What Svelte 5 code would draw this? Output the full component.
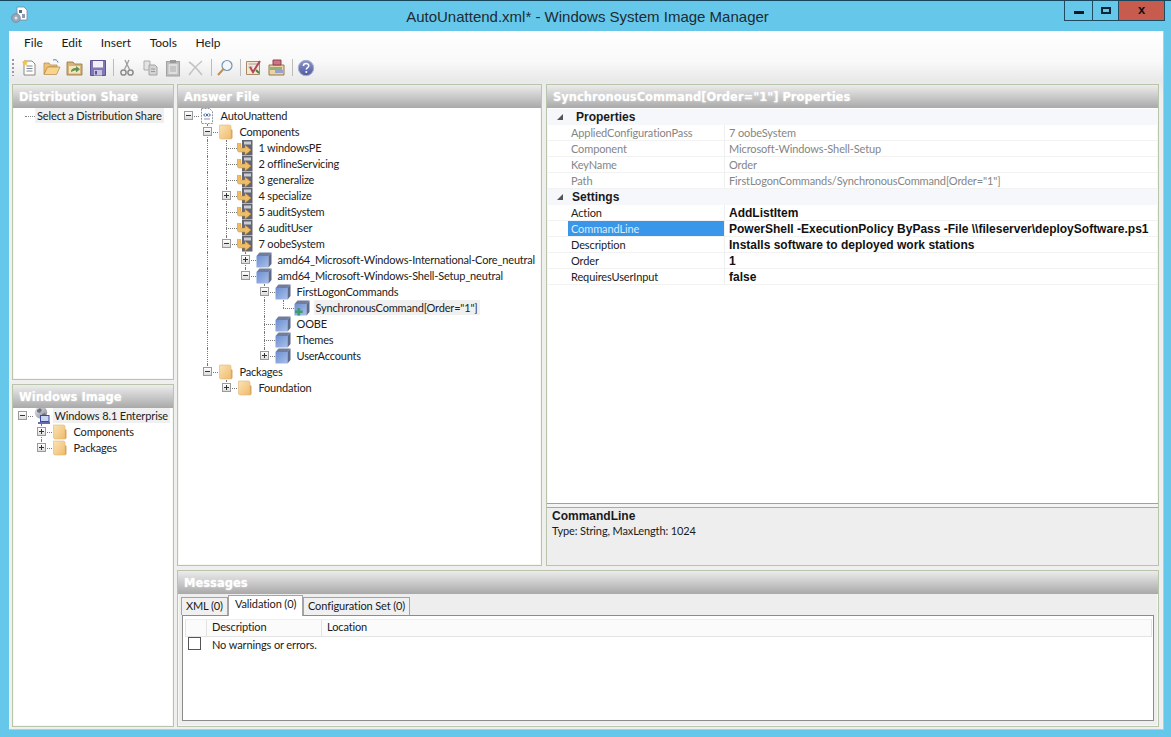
<script>
  const menus = ['File', 'Edit', 'Insert', 'Tools', 'Help'];
  const raw = [
    [0, '-', 'doc', 'AutoUnattend'],
    [1, '-', 'folder', 'Components'],
    [2, '', 'pass', '1 windowsPE'],
    [2, '', 'pass', '2 offlineServicing'],
    [2, '', 'pass', '3 generalize'],
    [2, '+', 'pass', '4 specialize'],
    [2, '', 'pass', '5 auditSystem'],
    [2, '', 'pass', '6 auditUser'],
    [2, '-', 'pass', '7 oobeSystem'],
    [3, '+', 'cube', 'amd64_Microsoft-Windows-International-Core_neutral'],
    [3, '-', 'cube', 'amd64_Microsoft-Windows-Shell-Setup_neutral'],
    [4, '-', 'cube', 'FirstLogonCommands'],
    [5, '', 'cubeplus', 'SynchronousCommand[Order="1"]', true],
    [4, '', 'cube', 'OOBE'],
    [4, '', 'cube', 'Themes'],
    [4, '+', 'cube', 'UserAccounts'],
    [1, '-', 'folder', 'Packages'],
    [2, '+', 'folder', 'Foundation']
  ];
  const imageRaw = [
    [0, '-', 'globe', 'Windows 8.1 Enterprise', true],
    [1, '+', 'folder', 'Components'],
    [1, '+', 'folder', 'Packages']
  ];

  function build(list) {
    return list.map((r, i) => {
      const [depth, exp, icon, label, sel] = r;
      const hasLater = (d) => {
        for (let j = i + 1; j < list.length; j++) {
          if (list[j][0] < d) return false;
          if (list[j][0] === d) return true;
        }
        return false;
      };
      const guides = [];
      for (let d = 1; d < depth; d++) if (hasLater(d)) guides.push(d);
      return { depth, exp, icon, label, sel, guides, up: depth > 0, down: hasLater(depth) };
    });
  }
  const answerRows = build(raw);
  const imageRows = build(imageRaw);

  const infoRows = [
    ['AppliedConfigurationPass', '7 oobeSystem'],
    ['Component', 'Microsoft-Windows-Shell-Setup'],
    ['KeyName', 'Order'],
    ['Path', 'FirstLogonCommands/SynchronousCommand[Order="1"]']
  ];
  const settingRows = [
    ['Action', 'AddListItem'],
    ['CommandLine', 'PowerShell -ExecutionPolicy ByPass -File \\\\fileserver\\deploySoftware.ps1'],
    ['Description', 'Installs software to deployed work stations'],
    ['Order', '1'],
    ['RequiresUserInput', 'false']
  ];
</script>

{#snippet icon(kind)}
  {#if kind === 'folder'}
    <svg class="ticon" viewBox="0 0 16 16">
      <path d="M1.500 1h10.500l1 1v13H2.500l-1-1z" fill="url(#gFolder)" stroke="#e0b777" stroke-width=".6"/>
      <path d="M13 5l1.500 1v8l-1.500 1.400z" fill="#d9a860"/>
    </svg>
  {:else if kind === 'pass'}
    <svg class="ticon" viewBox="0 0 16 16">
      <rect x="5" y="0" width="10.500" height="15.500" fill="#626670"/>
      <rect x="7" y="1.500" width="7" height="3" fill="#c9ccd2"/>
      <path d="M0 3.500h4v4.500h4V5l6 5-6 5v-3H1.500L0 10z" fill="#efbc68" stroke="#c98b30" stroke-width=".5"/>
    </svg>
  {:else if kind === 'cube' || kind === 'cubeplus'}
    <svg class="ticon" viewBox="0 0 16 16">
      <path d="M.5 4l3-3.500h12L12.500 4z" fill="#717d9c"/>
      <rect x=".5" y="4" width="12" height="11.500" fill="url(#gCube)"/>
      <path d="M12.500 4l3-3.500v11.500l-3 3.500z" fill="#5d6a8e"/>
      {#if kind === 'cubeplus'}
        <path d="M1 10.500h2.500V8h2.600v2.500h2.500v2.600H6.100v2.500H3.500v-2.500H1z" fill="#3f9a6e"/>
      {/if}
    </svg>
  {:else if kind === 'doc'}
    <svg class="ticon" viewBox="0 0 16 16">
      <path d="M2.500 .5h8l3 3v12h-11z" fill="#fff" stroke="#8f95a0" stroke-dasharray="2 1"/>
      <path d="M4.500 7l2-1.600M4.500 7l2 1.600M11.500 7l-2-1.600M11.500 7l-2 1.600" stroke="#4a6a99" fill="none"/>
      <circle cx="8" cy="7" r="1.200" fill="#3c6cb0"/>
      <path d="M5 11h6" stroke="#8f95a0"/>
    </svg>
  {:else if kind === 'globe'}
    <svg class="ticon globe" viewBox="0 0 18 18">
      <circle cx="8" cy="6.500" r="6.200" fill="url(#gGlobe)"/>
      <path d="M4 4l3-2 2 2-2 3-3-1zM9 8l3-1 1 2-3 2z" fill="#6f7280"/>
      <rect x="7.500" y="9.500" width="8.500" height="6" fill="#c8d4f2" stroke="#3b4a9c"/>
      <path d="M5 17h12" stroke="#3b4a9c" stroke-width="1.600"/>
    </svg>
  {/if}
{/snippet}

{#snippet tree(rows)}
  {#each rows as r}
    <div class="row" style="--d:{r.depth}">
      {#each r.guides as g}
        <span class="guide" style="--g:{g}"></span>
      {/each}
      {#if r.up}<span class="own-up"></span>{/if}
      {#if r.down}<span class="own-down"></span>{/if}
      <span class="conn"></span>
      {#if r.exp}
        <span class="exp">
          <span class="bar"></span>
          {#if r.exp === '+'}<span class="vbar"></span>{/if}
        </span>
      {/if}
      <span class="ic">{@render icon(r.icon)}</span>
      <span class="lbl" class:sel={r.sel}>{r.label}</span>
    </div>
  {/each}
{/snippet}

<svg class="defs" width="0" height="0" aria-hidden="true">
  <defs>
    <linearGradient id="gFolder" x1="0" y1="0" x2="1" y2="1">
      <stop offset="0" stop-color="#fbe3b5"/><stop offset="1" stop-color="#f0bb6c"/>
    </linearGradient>
    <linearGradient id="gCube" x1="0" y1="0" x2="1" y2="1">
      <stop offset="0" stop-color="#6d8ed0"/><stop offset="1" stop-color="#a9c0ea"/>
    </linearGradient>
    <linearGradient id="gGlobe" x1="0" y1="0" x2="1" y2="1">
      <stop offset="0" stop-color="#e8e8ee"/><stop offset="1" stop-color="#85858f"/>
    </linearGradient>
    <linearGradient id="gHelp" x1="0" y1="0" x2="0" y2="1">
      <stop offset="0" stop-color="#8d97c9"/><stop offset="1" stop-color="#4d5aa0"/>
    </linearGradient>
  </defs>
</svg>

<div class="window">
  <header class="titlebar">
    <svg class="appicon" viewBox="0 0 18 18">
      <path d="M6 1h7l3 3v10H6z" fill="#fff" stroke="#7b8794" stroke-width=".8"/>
      <rect x="8" y="4" width="3" height="3" fill="#5a6a80"/>
      <rect x="11" y="8" width="3" height="4" fill="#8c9bb0"/>
      <circle cx="5" cy="12" r="4.400" fill="#9aa7b8" stroke="#6c7a8c" stroke-width=".6"/>
      <circle cx="5" cy="12" r="1.500" fill="#dfe5ec"/>
    </svg>
    <div class="title">AutoUnattend.xml* - Windows System Image Manager</div>
    <div class="controls">
      <div class="ctl min"><span></span></div>
      <div class="ctl max"><span></span></div>
      <div class="ctl close">x</div>
    </div>
  </header>

  <div class="client">
    <nav class="menubar">
      {#each menus as m}<span class="menu">{m}</span>{/each}
    </nav>

    <div class="toolbar">
      <span class="grip"></span>
      <svg class="tb" viewBox="0 0 18 18">
        <path d="M4 2h8l3 3v11H4z" fill="#fff" stroke="#8a8a80"/>
        <path d="M6.500 7h6M6.500 9.500h6M6.500 12h6" stroke="#7e8794"/>
        <path d="M5 .5l1 2 2.200.3-1.600 1.500.4 2.200-2-1-2 1 .4-2.200L1.800 2.800 4 2.500z" fill="#f5c242"/>
      </svg>
      <svg class="tb" viewBox="0 0 18 18">
        <path d="M1 4h5l1.500 2H14v2H5L1 15z" fill="#eec27a" stroke="#b38a42" stroke-width=".7"/>
        <path d="M4.500 8H17l-3.500 7.500H1z" fill="#f8d48f" stroke="#b38a42" stroke-width=".7"/>
        <path d="M10 1c2.500-.8 4.500 0 5 2.500" stroke="#4a7bb8" fill="none"/>
      </svg>
      <svg class="tb" viewBox="0 0 18 18">
        <path d="M1 3h6l1.500 2H16v11H1z" fill="#d9b478" stroke="#8a7342" stroke-width=".8"/>
        <rect x="3" y="7" width="11" height="7.500" fill="#f6e4bb"/>
        <path d="M5 13c0-3 2-4 5-4V7l4 3.200-4 3.200v-2c-2 0-3.500.5-5 1.600z" fill="#62925a"/>
      </svg>
      <svg class="tb" viewBox="0 0 18 18">
        <path d="M1.500 1.500h15v15h-15z" fill="#8177b8" stroke="#5d5498"/>
        <rect x="4" y="2" width="10" height="6.500" fill="#f1eff8"/>
        <rect x="5" y="11" width="8" height="5.500" fill="#c8c4df"/>
        <rect x="6" y="12" width="2" height="3.500" fill="#5b53a0"/>
      </svg>
      <span class="sep"></span>
      <svg class="tb" viewBox="0 0 18 18">
        <path d="M11 1L6.500 10.500M7 1l4.500 9.500" stroke="#a0a0a0" stroke-width="1.400" fill="none"/>
        <circle cx="5.500" cy="13.500" r="2.600" fill="none" stroke="#8c8c8c" stroke-width="1.500"/>
        <circle cx="12.500" cy="13.500" r="2.600" fill="none" stroke="#8c8c8c" stroke-width="1.500"/>
      </svg>
      <svg class="tb" viewBox="0 0 18 18">
        <path d="M3 2h6v9H3z" fill="#e4e4e4" stroke="#ababab"/>
        <path d="M8 6h6l2 2v8H8z" fill="#d4d4d4" stroke="#a4a4a4"/>
        <path d="M10 10h4M10 12.500h4" stroke="#9a9a9a"/>
      </svg>
      <svg class="tb" viewBox="0 0 18 18">
        <rect x="2.500" y="2.500" width="13" height="14.500" fill="#bdbdbd" stroke="#a2a2a2"/>
        <rect x="6" y="1" width="6" height="3" fill="#9a9a9a"/>
        <rect x="4.500" y="5" width="9" height="10" fill="#dedede"/>
        <path d="M6 8h6M6 10h6M6 12h6" stroke="#adadad"/>
      </svg>
      <svg class="tb" viewBox="0 0 18 18">
        <path d="M2 3c5 3 9 8 13 13M15 2C10 6 6 10 2 16" stroke="#c4c4c4" stroke-width="1.600" fill="none"/>
      </svg>
      <span class="sep"></span>
      <svg class="tb" viewBox="0 0 18 18">
        <circle cx="11" cy="6.500" r="5" fill="#f4f7fa" stroke="#7794b0" stroke-width="1.200"/>
        <path d="M7.500 10L2 16" stroke="#c08f4d" stroke-width="2"/>
      </svg>
      <span class="sep"></span>
      <svg class="tb" viewBox="0 0 18 18">
        <path d="M1.500 2.500h13v13h-13z" fill="#f4e6cf" stroke="#a68a66"/>
        <path d="M3.500 5h9M3.500 8h4" stroke="#a6a0aa"/>
        <path d="M5 8l3 5L15 2" stroke="#b0455a" stroke-width="2" fill="none"/>
        <path d="M11 11l3 3" stroke="#4d7f4d" stroke-width="2"/>
      </svg>
      <svg class="tb" viewBox="0 0 18 18">
        <path d="M1 6h15v10H1z" fill="#ecd3a3" stroke="#8f7a52"/>
        <path d="M5 1h8v5H5z" fill="#cf7484" stroke="#8f4050"/>
        <path d="M2 8h12v3H2z" fill="#8fb07f"/>
        <path d="M7 11h8v3H7z" fill="#9aa0cc"/>
      </svg>
      <span class="sep"></span>
      <svg class="tb" viewBox="0 0 18 18">
        <circle cx="9" cy="9" r="7.700" fill="url(#gHelp)" stroke="#a9aecb"/>
        <path d="M6.400 7c0-3.300 5.400-3.300 5.400-.2 0 2-2.500 1.800-2.500 3.800" fill="none" stroke="#fff" stroke-width="1.500"/>
        <circle cx="9.300" cy="13" r="1" fill="#fff"/>
      </svg>
    </div>

    <main class="main">
      <div class="leftcol">
        <section class="panel share">
          <h2>Distribution Share</h2>
          <div class="body sharebody">
            <span class="dots"></span><span class="lbl sel">Select a Distribution Share</span>
          </div>
        </section>
        <section class="panel image">
          <h2>Windows Image</h2>
          <div class="body treebody small">{@render tree(imageRows)}</div>
        </section>
      </div>

      <section class="panel answer">
        <h2>Answer File</h2>
        <div class="body treebody">{@render tree(answerRows)}</div>
      </section>

      <section class="panel props">
        <h2>SynchronousCommand[Order="1"] Properties</h2>
        <div class="propgrid">
          <div class="cat first"><span class="tri"></span><b>Properties</b></div>
          {#each infoRows as p}
            <div class="prow info">
              <span class="gut"></span><span class="pname">{p[0]}</span><span class="pval">{p[1]}</span>
            </div>
          {/each}
          <div class="cat"><span class="tri"></span><b>Settings</b></div>
          {#each settingRows as p}
            <div class="prow">
              <span class="gut"></span>
              <span class="pname" class:selected={p[0] === 'CommandLine'}>{p[0]}</span>
              <span class="pval strong">{p[1]}</span>
            </div>
          {/each}
        </div>
        <div class="help">
          <b>CommandLine</b>
          <span>Type: String, MaxLength: 1024</span>
        </div>
      </section>

      <section class="panel messages">
        <h2>Messages</h2>
        <div class="tabs">
          <span class="tab xml">XML (0)</span>
          <span class="tab active">Validation (0)</span>
          <span class="tab config">Configuration Set (0)</span>
        </div>
        <div class="msgbox">
          <div class="msghead">
            <span class="mc0"></span>
            <span class="mc1">Description</span>
            <span class="mc2">Location</span>
          </div>
          <div class="msgrow">
            <span class="check"></span>
            <span class="msgtext">No warnings or errors.</span>
          </div>
        </div>
      </section>
    </main>
  </div>
</div>

<style>
  :global(body) { margin: 0; background: #65c8ea; }
  .defs { position: absolute; }
  .window {
    width: 1171px; height: 737px; overflow: hidden; box-sizing: border-box;
    background: #65c8ea; border-top: 1px solid #17465c;
    font: 11px Lato, "Liberation Sans", Arial, sans-serif; letter-spacing: -.12px; color: #1a1a1a;
    display: flex; flex-direction: column;
  }
  .titlebar { height: 30px; display: flex; align-items: flex-start; position: relative; padding-left: 11px; letter-spacing: 0; }
  .appicon { width: 18px; height: 18px; margin-top: 5px; }
  .title { position: absolute; left: 0; right: -4px; top: 7px; text-align: center; font: 15px "Liberation Sans", Arial, sans-serif; color: #1f2a33; }
  .controls { margin-left: auto; margin-right: 6px; display: flex; height: 20px; position: relative; }
  .ctl { box-sizing: border-box; border: 1px solid #1f4a60; border-top: 0; display: flex; align-items: center; justify-content: center; }
  .min { width: 29px; }
  .min span { width: 10px; height: 3px; background: #10181f; margin-top: 3px; }
  .max { width: 26px; border-left: 0; }
  .max span { border: 2px solid #10253a; box-sizing: content-box; width: 6px; height: 3px; }
  .close { width: 46px; border-left: 0; background: #c75c4e; color: #111; font: bold 13px "Liberation Sans", Arial, sans-serif; padding-bottom: 2px; }

  .client {
    margin: 0 7px 0 9px; height: 699px; box-sizing: border-box;
    background: linear-gradient(#fff 0, #f9f9f9 30px, #e9e9e9 50px, #efefef 60px);
    border-right: 1px solid #c3c9bd; border-bottom: 1px solid #c3c9bd;
    display: flex; flex-direction: column;
  }
  .menubar { height: 24px; display: flex; align-items: center; padding: 0 0 2px 15px; box-sizing: border-box; gap: 18.700px; font-size: 12px; letter-spacing: 0; }
  .menu { display: inline-block; }
  .toolbar { height: 25px; display: flex; align-items: center; padding-left: 3px; }
  .grip { width: 2px; height: 17px; margin-right: 3px; background: repeating-linear-gradient(#9a9a9a 0 2px, transparent 2px 4px); }
  .tb { width: 18px; height: 18px; margin: 0 2.500px; flex: none; }
  .sep { width: 1px; height: 17px; background: #bbb; margin: 0 1.500px 0 3.500px; flex: none; }

  .main {
    flex: 1; min-height: 0; display: grid; padding: 4px 3px 3px 3px;
    grid-template-columns: 162px 365px 614px; column-gap: 3px; row-gap: 4px;
    grid-template-rows: 482px 157px;
  }
  .props { margin-left: 1px; }
  .leftcol { grid-row: 1 / 3; display: flex; flex-direction: column; gap: 4px; }
  .share { height: 296px; box-sizing: border-box; }
  .image { height: 343px; box-sizing: border-box; }
  .messages { grid-column: 2 / 4; }

  .panel { box-sizing: border-box; border: 1px solid #b9c5aa; background: #fff; display: flex; flex-direction: column; min-height: 0; min-width: 0; box-shadow: inset 0 0 0 1px #f6f8f2; }
  h2 {
    margin: 0; height: 23px; padding-left: 6px; flex: none;
    font: bold 11.500px/24px "DejaVu Sans", Verdana, sans-serif; letter-spacing: 0; color: #fff;
    background: linear-gradient(#ececec, #a9a9a9);
    text-shadow: 0 0 2px rgba(255,255,255,.6);
    white-space: nowrap;
  }
  .body { flex: 1; min-height: 0; overflow: hidden; }
  .sharebody { display: flex; align-items: flex-start; align-self: stretch; height: 16px; flex: none; padding: 0 0 0 12px; white-space: nowrap; }
  .dots { width: 10px; flex: none; border-top: 1px dotted #888; margin-top: 8px; }
  .lbl.sel { background: #f0f0f0; }

  .treebody { --base: 11px; letter-spacing: -.18px; }
  .treebody.small { --base: 10px; letter-spacing: -.12px; }
  .row { position: relative; height: 16px; display: flex; align-items: flex-start; white-space: nowrap; padding-left: calc(var(--base) + var(--d) * 19px); }
  .guide, .own-up, .own-down { position: absolute; border-left: 1px dotted #777; }
  .guide { left: calc(var(--base) - 1px + var(--g) * 19px); top: 0; bottom: 0; }
  .own-up { left: calc(var(--base) - 1px + var(--d) * 19px); top: 0; height: 8px; }
  .own-down { left: calc(var(--base) - 1px + var(--d) * 19px); top: 8px; bottom: 0; }
  .conn { position: absolute; left: calc(var(--base) - 1px + var(--d) * 19px); width: 11px; top: 8px; border-top: 1px dotted #777; }
  .exp { position: absolute; left: calc(var(--base) - 5px + var(--d) * 19px); top: 3px; width: 9px; height: 9px; box-sizing: border-box; border: 1px solid #9a9a9a; background: linear-gradient(#fff, #dcdcdc); display: block; }
  .bar { position: absolute; left: 1px; right: 1px; top: 3px; height: 1px; background: #333; }
  .vbar { position: absolute; top: 1px; bottom: 1px; left: 3px; width: 1px; background: #333; }
  .ic { position: absolute; left: calc(var(--base) + 10px + var(--d) * 19px); top: 0; width: 16px; height: 16px; }
  .ticon { width: 16px; height: 16px; display: block; }
  .globe { width: 18px; height: 18px; margin-top: -2px; }
  .lbl { margin-left: 29.500px; padding: 0 2px; line-height: 15px; color: #222; }
  .sharebody .lbl { margin-left: 0; }

  .propgrid { flex: 1; min-height: 0; padding-top: 1px; overflow: hidden; }
  .cat { height: 16px; display: flex; align-items: center; background: #f5f7fb; position: relative; padding-left: 25px; }
  .cat.first { padding-left: 29px; }
  .cat b { font: bold 12px "Liberation Sans", Arial, sans-serif; letter-spacing: 0; }
  .tri { position: absolute; left: 10px; top: 5px; width: 0; height: 0; border-style: solid; border-width: 0 0 6px 6px; border-color: transparent transparent #555 transparent; }
  .prow { height: 16px; display: flex; box-sizing: border-box; border-bottom: 1px solid #f2f2f2; line-height: 16px; white-space: nowrap; }
  .gut { width: 21px; flex: none; }
  .pname { width: 157px; flex: none; box-sizing: border-box; padding-left: 3px; border-right: 1px solid #f0f0f0; color: #222; }
  .pval { padding-left: 4px; }
  .info .pname, .info .pval { color: #858585; }
  .strong { font: bold 12px/16px "Liberation Sans", Arial, sans-serif; letter-spacing: 0; color: #111; }
  .pname.selected { background: #3a96e8; color: #d6ecff; }
  .help { height: 62px; flex: none; box-sizing: border-box; background: #eeeeee; border-top: 1px solid #a0a0a0; box-shadow: inset 0 3px 0 #f4f4f4, inset 0 4px 0 #a8a8a8; padding: 6px 5px; display: flex; flex-direction: column; gap: 1px; line-height: 13px; }
  .help b { font: bold 12px/13px "Liberation Sans", Arial, sans-serif; letter-spacing: 0; }

  .messages { background: #eeeeee; }
  .tabs { height: 21px; flex: none; display: flex; align-items: flex-end; padding-left: 3px; position: relative; z-index: 1; }
  .tab { box-sizing: border-box; height: 18px; border: 1px solid #a4a4a4; border-bottom: 0; padding: 1px 0 0 4px; background: #f0f0f0; white-space: nowrap; }
  .xml { width: 47px; }
  .active { width: 75px; height: 21px; background: #fff; margin-bottom: -1px; padding: 1px 0 0 6px; }
  .config { width: 107px; }
  .msgbox { flex: 1; margin: 0 4px 5px 4px; border: 1px solid #8c8c8c; background: #fff; padding: 3px 1px 0 2px; box-sizing: border-box; min-height: 0; }
  .msghead { height: 18px; display: flex; align-items: stretch; line-height: 14px; background: #fbfbfb; border: 1px solid #e4e4e4; border-top: 1px solid #eee; box-sizing: border-box; }
  .mc0 { width: 21px; box-sizing: border-box; border-right: 1px solid #e2e2e2; }
  .mc1 { width: 115px; box-sizing: border-box; padding-left: 5px; border-right: 1px solid #e2e2e2; }
  .mc2 { padding-left: 5px; }
  .msgrow { display: flex; align-items: flex-start; height: 16px; padding-left: 3px; gap: 11px; line-height: 14px; }
  .check { width: 13px; height: 13px; box-sizing: border-box; border: 1px solid #555; background: #fff; margin-top: 0; }
  .msgtext { margin-top: 1px; }
</style>
